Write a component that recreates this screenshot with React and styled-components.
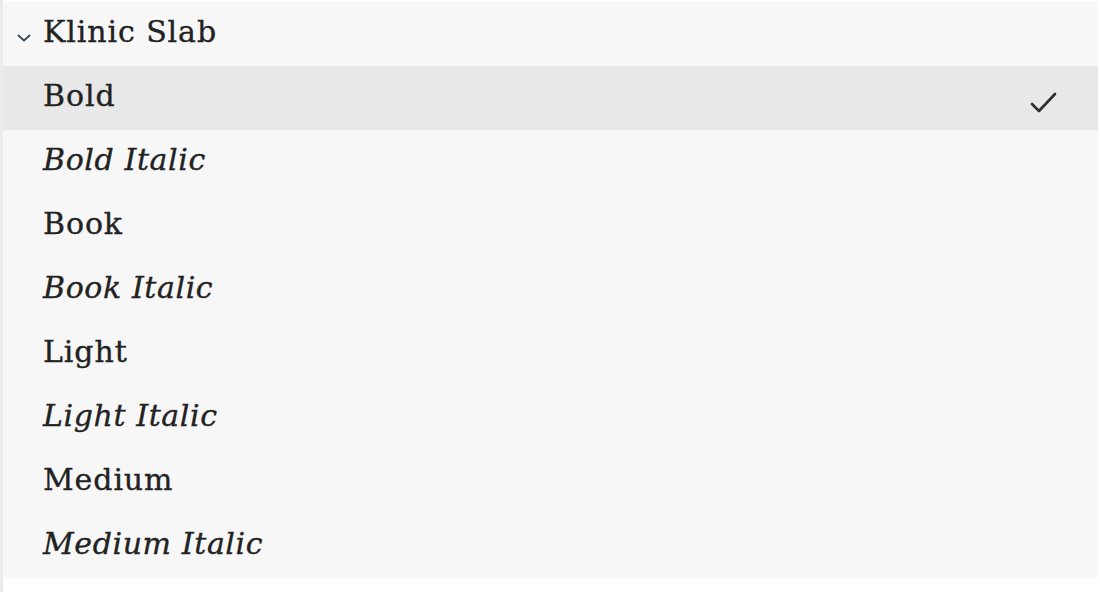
import React from "react";
import styled, { createGlobalStyle } from "styled-components";

const Global = createGlobalStyle`
  html, body { margin: 0; padding: 0; background: #ffffff; }
  body { font-family: "DejaVu Serif", "Liberation Serif", serif; }
`;

const Page = styled.div`
  box-sizing: border-box;
  width: 1100px;
  height: 592px;
  border-left: 3px solid #ebebeb;
  padding: 2px 2px 0 0;
  background: #ffffff;
`;

const Panel = styled.div`
  background: #f7f7f7;
  display: flex;
  flex-direction: column;
`;

const Row = styled.div`
  height: 64px;
  display: flex;
  align-items: center;
  padding: 0 40px 0 40px;
  background: ${(p) => (p.$selected ? "#e8e8e8" : "transparent")};
  color: #222222;
  font-family: "DejaVu Serif", "Liberation Serif", serif;
  font-size: 30px;
  font-style: ${(p) => (p.$italic ? "italic" : "normal")};
  letter-spacing: ${(p) => (p.$italic ? "0.6px" : "0.9px")};
  -webkit-text-stroke: 0.35px #222222;
`;

const Header = styled(Row)`
  padding-left: 13px;
  gap: 11px;
`;

const Label = styled.span`
  flex: 1;
  line-height: 1;
  margin-top: -5px;
`;

const CheckWrap = styled.span`
  display: flex;
  margin-top: 8px;
`;

const Chevron = () => (
  <svg width="16" height="16" viewBox="0 0 16 16" style={{ marginTop: 8 }}>
    <path d="M2.5 5.5 L8 10.5 L13.5 5.5" fill="none" stroke="#3a4550" strokeWidth="1.8" strokeLinecap="round" strokeLinejoin="round" />
  </svg>
);

const Check = () => (
  <CheckWrap>
    <svg width="28" height="24" viewBox="0 0 28 24">
      <path d="M2 14 L9 21 L25 4" fill="none" stroke="#2e2e2e" strokeWidth="2.6" strokeLinecap="round" strokeLinejoin="round" />
    </svg>
  </CheckWrap>
);

const styles = [
  { name: "Bold", italic: false, selected: true },
  { name: "Bold Italic", italic: true },
  { name: "Book", italic: false },
  { name: "Book Italic", italic: true },
  { name: "Light", italic: false },
  { name: "Light Italic", italic: true },
  { name: "Medium", italic: false },
  { name: "Medium Italic", italic: true },
];

export default function App() {
  return (
    <>
      <Global />
      <Page>
        <Panel>
          <Header>
            <Chevron />
            <Label>Klinic Slab</Label>
          </Header>
          {styles.map((s) => (
            <Row key={s.name} $italic={s.italic} $selected={s.selected}>
              <Label>{s.name}</Label>
              {s.selected && <Check />}
            </Row>
          ))}
        </Panel>
      </Page>
    </>
  );
}
